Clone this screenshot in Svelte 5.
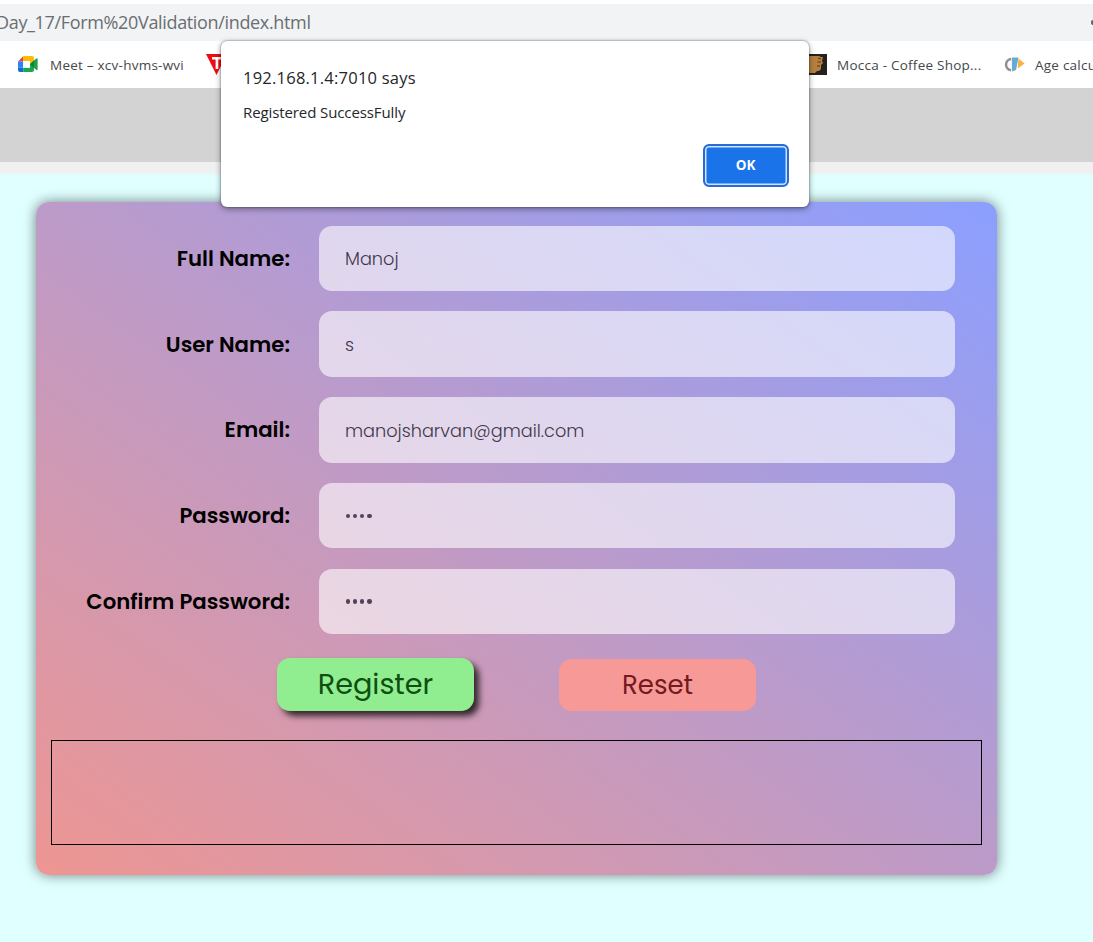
<script>
  const fields = [
    { id: 'fullname', label: 'Full Name:', value: 'Manoj' },
    { id: 'username', label: 'User Name:', value: 's' },
    { id: 'email', label: 'Email:', value: 'manojsharvan@gmail.com' },
    { id: 'password', label: 'Password:', dots: true },
    { id: 'confirm', label: 'Confirm Password:', dots: true }
  ];
</script>

<div class="window">
  <div class="address"><span>Day_17/Form%20Validation/index.html</span><i class="dot"></i></div>

  <div class="bookmarks">
    <svg class="meet" width="20" height="17" viewBox="0 0 20 17">
      <path d="M0 5.5 5.5 0v5.5z" fill="#e94235" />
      <path d="M5.2 0H14q2 0 2 2v5l-4 2V5.5H5.2z" fill="#fcbb06" />
      <path d="M0 5.5h5.2v6H0z" fill="#2684fc" />
      <path d="M0 11.5h5.2V16H2q-2 0-2-2z" fill="#1768d5" />
      <path d="M5.2 11.5H12V8l4-1v7q0 2-2 2H5.2z" fill="#18a84f" />
      <path d="M12 8.2 18.2 2.6q1.4-.9 1.4.5v10.2q0 1.4-1.4.5z" fill="#279b4f" />
      <path d="M12 8.2 16 4.6v7.2z" fill="#078537" />
      <path d="M5.2 5H12v6.8H5.2z" fill="#fff" />
    </svg>
    <span class="meet-label">Meet – xcv-hvms-wvi</span>
    <svg class="tri" width="24" height="22" viewBox="0 0 24 22">
      <path d="M0 0h21L10.5 21z" fill="#ee0c11" />
      <path d="M6 3h9.5v2.6h-3.2V15H9.6V5.6H6z" fill="#fff" />
    </svg>
    <svg class="mocca" width="22" height="21" viewBox="0 0 22 21">
      <path d="M0 0h22v21H0z" fill="#25211f" />
      <path d="M2 2h12l2 1 2 0-1 4 1 2-2 2v4l-2 2-2 0-2 2H2z" fill="#b5803f" />
      <path d="M13 4l3 1M12.5 8l3.5 0M12 12l3 0" stroke="#4b2c15" stroke-width="0.9" />
    </svg>
    <span class="mocca-label">Mocca - Coffee Shop...</span>
    <svg class="age" width="21" height="16" viewBox="0 0 21 16">
      <path d="M7 1.9A5.7 5.7 0 0 0 7 13.2" fill="none" stroke="#8b9094" stroke-width="2.5" />
      <path d="M7.8 0.5H14.5L12 13 8 14.5z" fill="#65abd5" />
      <path d="M14.5 1.5 20.6 6.5 13.6 11.5z" fill="#fbb143" />
    </svg>
    <span class="age-label">Age calcu</span>
  </div>

  <div class="header"></div>
  <div class="strip"></div>

  <main>
    <form onsubmit={(e) => e.preventDefault()}>
      {#each fields as f}
        <div class="row">
          <label for={f.id}>{f.label}</label>
          <div class="field" id={f.id} class:dots={f.dots}>
            {#if f.dots}
              {#each [0, 1, 2, 3] as d}<i class="bullet"></i>{/each}
            {:else}
              <span>{f.value}</span>
            {/if}
          </div>
        </div>
      {/each}
      <div class="buttons">
        <button class="register" type="submit">Register</button>
        <button class="reset" type="button">Reset</button>
      </div>
      <div class="result"></div>
    </form>
  </main>

  <div class="dialog" role="alertdialog">
    <div class="origin">192.168.1.4:7010 says</div>
    <div class="message">Registered SuccessFully</div>
    <button class="ok">OK</button>
  </div>
</div>

<style>
  :global(body) { background: #fff; overflow: hidden; }
  * { box-sizing: border-box; }
  .window {
    position: relative;
    width: 1093px;
    height: 942px;
    padding-top: 4px;
    overflow: hidden;
    display: flex;
    flex-direction: column;
    font-family: "Open Sans", "Noto Sans", sans-serif;
    white-space: nowrap;
  }
  .address {
    height: 37px;
    flex: none;
    background: #f1f3f4;
    color: #6a6e72;
    font-size: 18px;
    line-height: 37px;
    display: flex;
    justify-content: space-between;
    align-items: center;
  }
  .address span { margin-left: -4px; letter-spacing: -0.34px; }
  .dot { width: 2px; height: 5px; background: #5f6368; border-radius: 2px 0 0 2px; margin-bottom: 1px; }
  .bookmarks {
    height: 47px;
    flex: none;
    background: #fff;
    display: flex;
    align-items: center;
    padding: 1px 0 0 18px;
    font-size: 13.5px;
    letter-spacing: 0.24px;
    color: #45484c;
    overflow: hidden;
  }
  .bookmarks svg, .bookmarks span { flex: none; }
  .meet { margin-top: -1px; }
  .meet-label { margin-left: 12px; width: 156px; }
  .tri { margin-top: -1px; }
  .mocca { margin-left: 575px; margin-top: -1px; }
  .mocca-label { margin-left: 10px; width: 167px; }
  .age-label { margin-left: 10px; }
  .header { height: 74px; flex: none; background: #d3d3d3; }
  .strip { height: 14px; flex: none; background: linear-gradient(#f0f0f0 72%, #e0ffff); }
  main { flex: 1; background: #e0ffff; padding: 26px 0 0 36px; }
  form {
    width: 961px;
    height: 673px;
    border-radius: 13px;
    background: linear-gradient(to top right, #ee9692, #8b9fff);
    box-shadow: 0 0 13px rgba(0, 0, 0, 0.5);
    padding: 23.6px 15px 0;
    font-family: Poppins, Inter, sans-serif;
  }
  .row { display: flex; height: 65.5px; margin-bottom: 20.25px; align-items: stretch; }
  label {
    width: 239px;
    margin-right: 29px;
    display: flex;
    justify-content: flex-end;
    align-items: center;
    font-weight: 600;
    font-size: 21.25px;
    color: #000;
  }
  .field {
    width: 636px;
    border-radius: 13px;
    background: rgba(255, 255, 255, 0.6);
    display: flex;
    align-items: center;
    padding: 0.4px 0 0 26px;
    font-size: 17.7px;
    font-weight: 300;
    color: #41384c;
  }
  .dots { gap: 3px; padding-left: 26.5px; }
  .bullet { width: 4.3px; height: 4.3px; border-radius: 50%; background: #53435a; }
  .buttons { display: flex; gap: 85px; padding-left: 226px; margin-top: 23.9px; height: 53px; align-items: flex-end; }
  button { border: 0; padding: 0; font-family: inherit; }
  .register, .reset { width: 197px; border-radius: 13px; }
  .register { height: 53px; background: #90ee90; color: #104f12; font-size: 28.7px; box-shadow: 5px 5px 6px rgba(0, 0, 0, 0.75); }
  .reset { height: 52px; padding-top: 2px; background: #f79a97; color: #731b20; font-size: 26px; }
  .result { height: 105px; margin-top: 29px; border: 1px solid #000; }
  .dialog {
    position: absolute;
    left: 221px;
    top: 41px;
    width: 588px;
    height: 166px;
    background: #fff;
    border-radius: 6px;
    box-shadow: 0 2px 6px rgba(0, 0, 0, 0.4), 0 0 2px rgba(0, 0, 0, 0.55);
    padding: 24px 20px 20px 22px;
    display: flex;
    flex-direction: column;
    color: #242629;
  }
  .origin { font-size: 16.5px; line-height: 25px; letter-spacing: 0.23px; }
  .message { font-size: 15px; line-height: 22px; margin-top: 11px; letter-spacing: -0.1px; }
  .ok {
    width: 86px;
    height: 43px;
    flex: none;
    margin: 21px 0 0 auto;
    padding: 0 1px 1px 0;
    border-radius: 6px;
    border: 2px solid #2b6bd3;
    background: #1a73e8;
    box-shadow: inset 0 0 0 1.5px #cbe5ff;
    color: #fff;
    font-size: 13.5px;
    font-weight: 700;
  }
</style>
